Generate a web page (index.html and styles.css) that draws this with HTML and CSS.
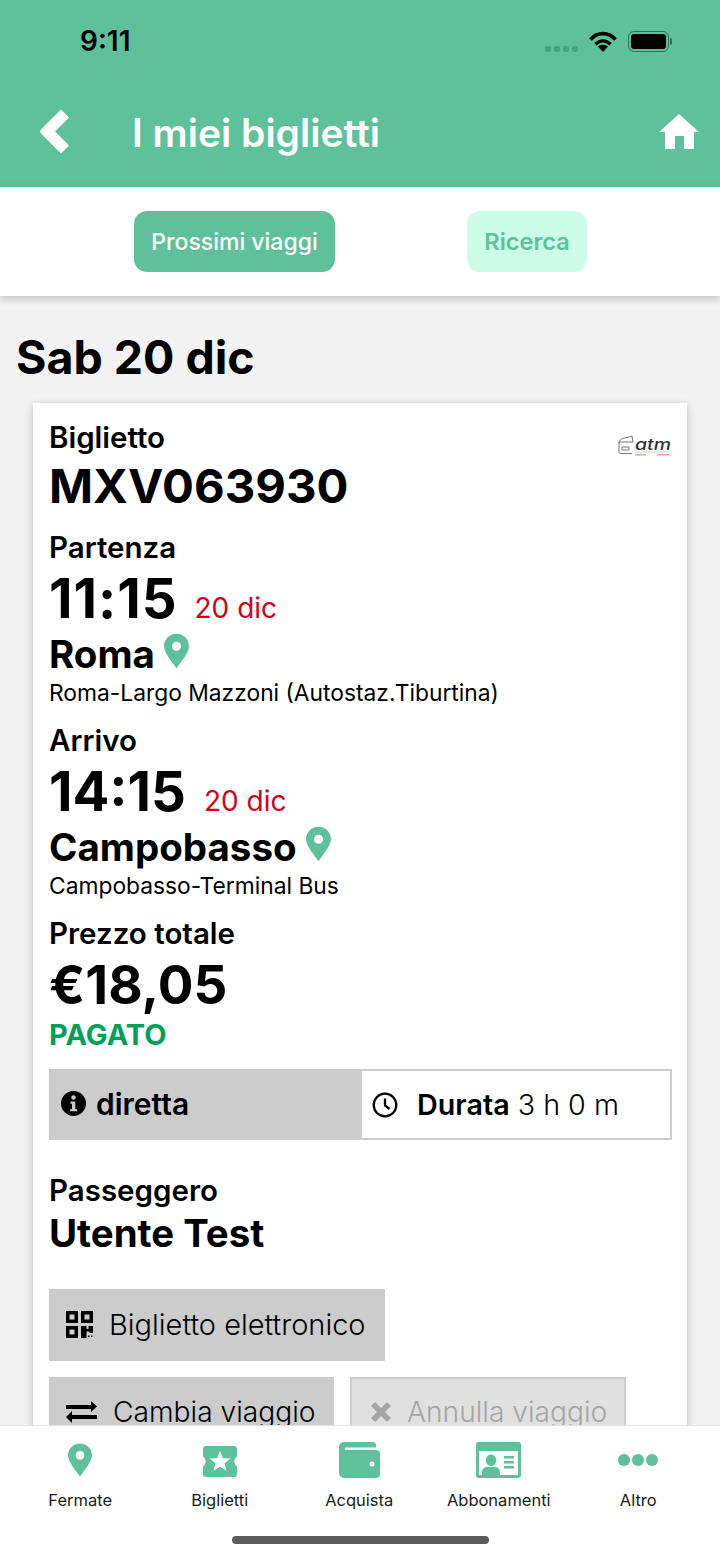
FILE: index.html
```html
<!DOCTYPE html>
<html>
    <head>
        <meta charset="utf-8">
        <link rel="stylesheet" href="styles.css">
        <title>I miei biglietti</title>
    </head>

    <body>
        <svg class="defs" width="0" height="0">
            <symbol id="pin" viewBox="0 0 26 36">
                <path fill-rule="evenodd" d="M13 0C5.800 0 0 5.700 0 12.800 0 20 8.600 29.500 13 36c4.400-6.500 13-16 13-23.200C26 5.700 20.200 0 13 0zm0 8.300a4.700 4.700 0 1 1 0 9.400 4.700 4.700 0 0 1 0-9.400z"/>
            </symbol>
        </svg>

        <div class="screen">
            <header class="top">
                <div class="status">
                    <span class="clock">9:11</span>
                    <div class="status-icons">
                        <div class="signal"><i></i><i></i><i></i><i></i></div>
                        <svg class="wifi" width="28" height="21" viewBox="0 0 28 21">
                            <path d="M1.500 8.500C8.500 .7 19.500 .7 26.500 8.500" fill="none" stroke="#000" stroke-width="3.600"/>
                            <path d="M6.500 13.200c4.300-4.400 10.700-4.400 15 0" fill="none" stroke="#000" stroke-width="3.400"/>
                            <path d="M14 21l-5-5.500c2.800-2.300 7.200-2.300 10 0z"/>
                        </svg>
                        <div class="battery"><div class="battery-fill"></div></div>
                        <div class="battery-tip"></div>
                    </div>
                </div>
                <div class="nav">
                    <svg class="back" width="30" height="45" viewBox="0 0 30 45">
                        <path d="M21 1.500L28 8.500 14 22.500 28 36.500 21 43.500 2 24.500Q0 22.500 2 20.500Z" fill="#fff" stroke="#fff" stroke-width="1.500" stroke-linejoin="round"/>
                    </svg>
                    <h1 class="title">I miei biglietti</h1>
                    <svg class="home" width="40" height="35" viewBox="0 0 40 35">
                        <path d="M20 0L40 18H35V35H25V22H16V35H6V18H0Z" fill="#fff"/>
                    </svg>
                </div>
            </header>

            <div class="tabs">
                <button class="tab tab-on">Prossimi viaggi</button>
                <button class="tab tab-off">Ricerca</button>
            </div>

            <main class="content">
                <h2 class="day">Sab 20 dic</h2>
                <section class="card">
                    <svg class="operator" width="54" height="22" viewBox="0 0 54 22">
                        <path d="M1 8c0-3 3-5 8-5.500l5-1.500 1 6H1zM1 8v9c0 1 1 1.500 2 1.500h11M4 12h7v3H4z" fill="none" stroke="#777" stroke-width="1"/>
                        <text class="operator-name" x="17" y="14.500" textLength="36" lengthAdjust="spacingAndGlyphs">atm</text>
                        <rect x="17" y="16.500" width="34" height="1" fill="#ccc"/>
                        <rect x="17" y="19" width="11" height="1.500" fill="#8fd0a0"/>
                        <rect x="39" y="19" width="12" height="1.500" fill="#f0a0a0"/>
                    </svg>

                    <div class="label">Biglietto</div>
                    <div class="code">MXV063930</div>

                    <div class="label l-leg">Partenza</div>
                    <div class="time-row"><span class="time time-ones">11:15</span><span class="date">20 dic</span></div>
                    <div class="city-row">
                        <span class="city">Roma</span>
                        <svg class="city-pin"><use href="#pin"/></svg>
                    </div>
                    <div class="station">Roma-Largo Mazzoni (Autostaz.Tiburtina)</div>

                    <div class="label l-leg">Arrivo</div>
                    <div class="time-row"><span class="time">14:15</span><span class="date">20 dic</span></div>
                    <div class="city-row">
                        <span class="city">Campobasso</span>
                        <svg class="city-pin"><use href="#pin"/></svg>
                    </div>
                    <div class="station">Campobasso-Terminal Bus</div>

                    <div class="label l-leg">Prezzo totale</div>
                    <div class="price">€18,05</div>
                    <div class="paid">PAGATO</div>

                    <div class="info">
                        <div class="info-type">
                            <svg width="25" height="25" viewBox="0 0 25 25">
                                <circle cx="12.500" cy="12.500" r="12.500"/>
                                <circle cx="12.500" cy="6.500" r="2.200" fill="#ccc"/>
                                <path d="M9.500 10.500h4.800v7.500h1.700v2.200H9.200V18h1.800v-5.300H9.500z" fill="#ccc"/>
                            </svg>
                            <span>diretta</span>
                        </div>
                        <div class="info-time">
                            <svg width="26" height="26" viewBox="0 0 26 26" fill="none" stroke="#000" stroke-width="2.300">
                                <circle cx="13" cy="13" r="11.300"/>
                                <path d="M13 6.500V13.500l4.500 3.500"/>
                            </svg>
                            <span class="info-text"><b>Durata</b> 3 h 0 m</span>
                        </div>
                    </div>

                    <div class="label l-pass">Passeggero</div>
                    <div class="name">Utente Test</div>

                    <div class="actions">
                        <div class="btn-row">
                            <div class="btn btn-qr">
                                <svg width="27" height="27" viewBox="0 0 27 27">
                                    <path fill-rule="evenodd" d="M0 0h12v12H0zm3.500 3.500v5h5v-5zM15 0h12v12H15zm3.500 3.500v5h5v-5zM0 15h12v12H0zm3.500 3.500v5h5v-5zM15 15h5.500v3h2v-3H27v7h-3.500v-1.500h-3V27H15z"/>
                                    <path d="M22 24.500h1.500V26H22zM25 24.500h1.500V26H25z"/>
                                </svg>
                                <span>Biglietto elettronico</span>
                            </div>
                        </div>
                        <div class="btn-row">
                            <div class="btn btn-change">
                                <svg width="31" height="22" viewBox="0 0 31 22">
                                    <path d="M0 4h25V0l6 5.500-6 5.500V8H0zM31 14H6v-4l-6 6 6 6v-4h25z"/>
                                </svg>
                                <span>Cambia viaggio</span>
                            </div>
                            <div class="btn btn-cancel">
                                <svg width="22" height="22" viewBox="0 0 22 22">
                                    <path d="M5 1l6 6 6-6 4 4-6 6 6 6-4 4-6-6-6 6-4-4 6-6-6-6z" fill="#a5a5a5"/>
                                </svg>
                                <span>Annulla viaggio</span>
                            </div>
                        </div>
                    </div>
                </section>
            </main>

            <nav class="bar">
                <div class="bar-items">
                    <div class="bar-item">
                        <svg class="bar-icon bar-pin" width="24" height="34"><use href="#pin"/></svg>
                        <span>Fermate</span>
                    </div>
                    <div class="bar-item">
                        <svg class="bar-icon bar-ticket" width="34" height="31" viewBox="0 0 34 31">
                            <path fill-rule="evenodd" d="M3 0h28a3 3 0 0 1 3 3v7.500a6 6 0 0 0 0 10V28a3 3 0 0 1-3 3H3a3 3 0 0 1-3-3v-7.500a6 6 0 0 0 0-10V3a3 3 0 0 1 3-3zM17 5l-2.800 6.900-7.700.5 5.900 4.900-1.900 7.400 6.500-4 6.500 4-1.900-7.400 5.900-4.900-7.700-.5z"/>
                        </svg>
                        <span>Biglietti</span>
                    </div>
                    <div class="bar-item">
                        <svg class="bar-icon" width="41" height="36" viewBox="0 0 41 36">
                            <path fill-rule="evenodd" d="M5 0h29a3 3 0 0 1 3 2.800v2.700H7a1.300 1.300 0 0 0 0 2.600h30a4 4 0 0 1 4 4V32a4 4 0 0 1-4 4H5a5 5 0 0 1-5-5V5a5 5 0 0 1 5-5zm28 19.500a2.500 2.500 0 1 0 0 5 2.500 2.500 0 0 0 0-5z"/>
                        </svg>
                        <span>Acquista</span>
                    </div>
                    <div class="bar-item">
                        <svg class="bar-icon" width="45" height="36" viewBox="0 0 45 36">
                            <path fill-rule="evenodd" d="M3 0h39a3 3 0 0 1 3 3v30a3 3 0 0 1-3 3H3a3 3 0 0 1-3-3V3a3 3 0 0 1 3-3zm0 9v24h39V9zM15 12.500a5.300 5.800 0 1 1 0 11.600 5.300 5.800 0 0 1 0-11.600zM6 33v-3c0-3 2.500-5 5-5h8c2.500 0 5 2 5 5v3zM28 14h10v2.500H28zM28 19h10v2.500H28zM28 24h10v2.500H28z"/>
                        </svg>
                        <span>Abbonamenti</span>
                    </div>
                    <div class="bar-item">
                        <svg class="bar-icon" width="40" height="36" viewBox="0 0 40 36">
                            <circle cx="6" cy="18" r="6"/>
                            <circle cx="20" cy="18" r="6"/>
                            <circle cx="34" cy="18" r="6"/>
                        </svg>
                        <span>Altro</span>
                    </div>
                </div>
                <div class="home-line"></div>
            </nav>
        </div>
    </body>
</html>
```

FILE: styles.css
```css
* {
    box-sizing: border-box;
}

body {
    margin: 0;
    background-color: #f2f2f2;
    font-family: Inter, "Liberation Sans", sans-serif;
    color: #000;
}

.defs {
    display: block;
    height: 0;
}

.screen {
    width: 720px;
    height: 1558px;
    display: flex;
    flex-direction: column;
    overflow: hidden;
}

/* Header */
.top {
    height: 187px;
    flex: none;
    background-color: #5ec19b;
}

.status {
    height: 82px;
    padding: 0 48px 0 80px;
    display: flex;
    justify-content: space-between;
    align-items: center;
}

.clock {
    font-size: 28px;
    font-weight: 600;
}

.status-icons {
    display: flex;
    align-items: center;
}

.signal {
    display: flex;
    gap: 3px;
    margin-top: 15px;
    margin-right: 11px;
}

.signal i {
    width: 6px;
    height: 6px;
    border-radius: 2px;
    background-color: #47a27f;
}

.wifi {
    margin-right: 11px;
}

.battery {
    width: 41px;
    height: 21px;
    padding: 2px;
    border: 1.5px solid #2f6f57;
    border-radius: 6px;
}

.battery-fill {
    height: 100%;
    background-color: #000;
    border-radius: 3px;
}

.battery-tip {
    width: 2px;
    height: 7px;
    margin-left: 1px;
    border-radius: 0 2px 2px 0;
    background-color: #2f6f57;
}

.nav {
    height: 105px;
    padding: 0 21px 0 40px;
    display: flex;
    align-items: center;
}

.back {
    margin-right: 62px;
    margin-top: -7px;
}

.title {
    margin: -4px 0 0;
    flex: 1;
    font-size: 39px;
    font-weight: 600;
    color: #fff;
}

.home {
    margin-top: -7px;
}

/* Tabs */
.tabs {
    height: 109px;
    flex: none;
    background-color: #fff;
    display: flex;
    align-items: flex-start;
    padding-top: 24px;
    box-shadow: 0 3px 8px rgba(0, 0, 0, 0.2);
    position: relative;
}

.tab {
    height: 61px;
    border: none;
    border-radius: 13px;
    font-family: inherit;
    padding: 0;
}

.tab-on {
    width: 201px;
    margin-left: 134px;
    background-color: #5ec19b;
    color: #fff;
    font-size: 23px;
    font-weight: 500;
}

.tab-off {
    width: 120px;
    margin-left: 132px;
    background-color: #cdfce9;
    color: #5ec19b;
    font-size: 23.5px;
    font-weight: 600;
}

/* Content */
.content {
    flex: 1;
    min-height: 0;
    overflow: hidden;
    padding: 0 33px;
}

.day {
    margin: 31px 0 15px -17px;
    font-size: 46.5px;
    line-height: 61px;
    font-weight: 700;
}

.card {
    background-color: #fff;
    padding: 17px 15px 40px 16px;
    box-shadow: 0 2px 8px rgba(0, 0, 0, 0.22);
    position: relative;
}

.operator {
    position: absolute;
    top: 32px;
    right: 15px;
}

.operator-name {
    font-size: 15px;
    font-style: italic;
    font-weight: 500;
    fill: #333;
}

.label {
    font-size: 29.5px;
    line-height: 34px;
    margin-bottom: 2px;
    font-weight: 600;
}

.l-leg {
    margin-top: 15px;
}

.code {
    font-size: 47.3px;
    line-height: 59px;
    font-weight: 700;
}

.time-row {
    display: flex;
    align-items: baseline;
    height: 63px;
}

.time {
    font-size: 54.5px;
    line-height: 64px;
    font-weight: 700;
    margin-right: 18px;
}

.time-ones {
    letter-spacing: 1px;
    margin-right: 17px;
}

.date {
    font-size: 28px;
    color: #d0021b;
}

.city-row {
    display: flex;
    align-items: flex-start;
    height: 46px;
}

.city {
    font-size: 38.5px;
    line-height: 50px;
    font-weight: 700;
}

.city-pin {
    width: 25px;
    height: 36px;
    margin-left: 9px;
    margin-top: 4px;
    fill: #5ec19b;
}

.station {
    font-size: 22.8px;
    line-height: 30px;
    margin-top: 3px;
}

.price {
    font-size: 53px;
    line-height: 66px;
    font-weight: 700;
}

.paid {
    font-size: 29px;
    line-height: 34px;
    font-weight: 700;
    color: #00a05a;
}

/* Info strip */
.info {
    display: flex;
    height: 71px;
    margin-top: 17px;
}

.info-type {
    width: 313px;
    padding: 0 0 2px 12px;
    background-color: #ccc;
    display: flex;
    align-items: center;
    gap: 10px;
    font-size: 30px;
    font-weight: 600;
}

.info-time {
    width: 310px;
    border: 2px solid #ccc;
    border-left: none;
    display: flex;
    align-items: center;
    padding-left: 10px;
    gap: 19px;
}

.info-text {
    font-size: 28.7px;
    font-weight: 300;
}

.info-text b {
    font-weight: 600;
}

.l-pass {
    margin-top: 33px;
}

.name {
    font-size: 38.4px;
    line-height: 48px;
    font-weight: 700;
}

/* Buttons */
.actions {
    margin-top: 32px;
    display: flex;
    flex-direction: column;
    gap: 16px;
}

.btn-row {
    display: flex;
    gap: 16px;
}

.btn {
    height: 72px;
    padding-bottom: 2px;
    background-color: #ccc;
    display: flex;
    align-items: center;
    font-size: 28.2px;
    font-weight: 300;
    white-space: nowrap;
}

.btn-qr {
    width: 336px;
    padding-left: 17px;
    gap: 16px;
    font-size: 29px;
}

.btn-change {
    width: 285px;
    padding-left: 17px;
    gap: 16px;
}

.btn-cancel {
    width: 276px;
    padding-left: 18px;
    gap: 15px;
    background-color: #e0e0e0;
    border: 2px solid #ccc;
    color: #a5a5a5;
}

/* Bottom bar */
.bar {
    height: 133px;
    flex: none;
    background-color: #fff;
    border-top: 1px solid #e3e3e3;
    position: relative;
}

.bar-items {
    display: flex;
    padding: 16px 0 0 10.5px;
}

.bar-item {
    width: 139.5px;
    display: flex;
    flex-direction: column;
    align-items: center;
    font-size: 16.5px;
    line-height: 20px;
    color: #1a1a1a;
}

.bar-icon {
    fill: #5ec19b;
    margin-bottom: 12px;
}

.bar-pin {
    margin-top: 1px;
    margin-bottom: 13px;
}

.bar-ticket {
    margin-top: 4px;
    margin-bottom: 13px;
}

.home-line {
    width: 257px;
    height: 8px;
    margin: 26px auto 0;
    border-radius: 4px;
    background-color: #5c5c5c;
}
```
